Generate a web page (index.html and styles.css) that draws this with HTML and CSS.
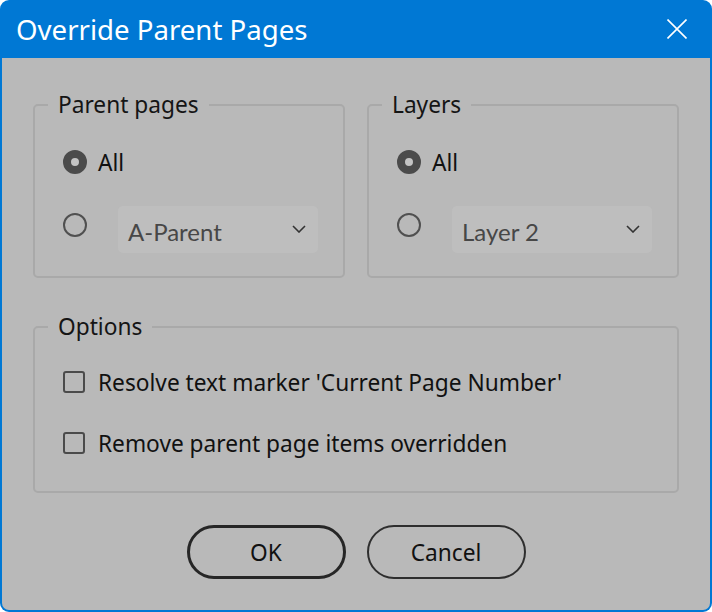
FILE: index.html
```html
<!DOCTYPE html>
<html lang="en">
<head>
  <meta charset="UTF-8">
  <title>Override Parent Pages</title>
  <link rel="stylesheet" href="styles.css">
</head>
<body>
  <div class="window">
    <div class="titlebar">
      <span class="title">Override Parent Pages</span>
      <svg class="close" width="20" height="20" viewBox="0 0 20 20">
        <path d="M0.5 0.5 L19.5 19.5 M19.5 0.5 L0.5 19.5" stroke="#fff" stroke-width="1.6" fill="none"/>
      </svg>
    </div>

    <div class="content">
      <div class="groups">
        <fieldset class="group">
          <legend>Parent pages</legend>
          <div class="row first">
            <span class="radio checked"></span>
            <span class="label">All</span>
          </div>
          <div class="row select-row">
            <span class="radio"></span>
            <div class="select">
              <span>A-Parent</span>
              <svg width="14" height="8" viewBox="0 0 14 8"><path d="M1 1 L7 7 L13 1" stroke="#333" stroke-width="1.6" fill="none"/></svg>
            </div>
          </div>
        </fieldset>

        <fieldset class="group">
          <legend>Layers</legend>
          <div class="row first">
            <span class="radio checked"></span>
            <span class="label">All</span>
          </div>
          <div class="row select-row">
            <span class="radio"></span>
            <div class="select">
              <span>Layer 2</span>
              <svg width="14" height="8" viewBox="0 0 14 8"><path d="M1 1 L7 7 L13 1" stroke="#333" stroke-width="1.6" fill="none"/></svg>
            </div>
          </div>
        </fieldset>
      </div>

      <fieldset class="group options">
        <legend>Options</legend>
        <div class="row first">
          <span class="checkbox"></span>
          <span class="label">Resolve text marker 'Current Page Number'</span>
        </div>
        <div class="row second">
          <span class="checkbox"></span>
          <span class="label">Remove parent page items overridden</span>
        </div>
      </fieldset>

      <div class="buttons">
        <button class="btn default">OK</button>
        <button class="btn">Cancel</button>
      </div>
    </div>
  </div>
</body>
</html>
```

FILE: styles.css
```css
body {
  margin: 0;
  background: #fff;
  font-family: "Noto Sans", "Open Sans", sans-serif;
}

.window {
  width: 712px;
  height: 612px;
  box-sizing: border-box;
  background: #0078d4;
  border-radius: 9px;
  padding: 0 2px 2px 2px;
  display: flex;
  flex-direction: column;
}

.titlebar {
  height: 58px;
  display: flex;
  align-items: center;
  justify-content: space-between;
  padding: 0 23px 0 14px;
  flex-shrink: 0;
}

.title {
  color: #fff;
  font-size: 27.6px;
  line-height: 30px;
}

.close {
  display: block;
}

.content {
  flex: 1;
  background: #b9b9b9;
  border-radius: 0 0 7px 7px;
  padding: 32px 31px 0 31px;
  display: flex;
  flex-direction: column;
}

.groups {
  display: flex;
  gap: 22px;
}

.group {
  margin: 0;
  border: 2px solid #a9a9a9;
  border-radius: 5px;
  padding: 0 0 0 13px;
  min-width: 0;
}

.groups .group {
  width: 312px;
  height: 188px;
  box-sizing: border-box;
}

legend {
  font-size: 22.7px;
  line-height: 30px;
  color: #151515;
  padding: 0 10px;
}

.row {
  display: flex;
  align-items: center;
  padding-left: 15px;
  height: 30px;
}

.row.first {
  margin-top: 27px;
}

.select-row {
  margin-top: 29px;
  height: 47px;
  align-items: flex-start;
}

.label {
  font-size: 22.7px;
  color: #111;
}

.radio {
  width: 24px;
  height: 24px;
  box-sizing: border-box;
  border: 2px solid #505050;
  border-radius: 50%;
  flex-shrink: 0;
  margin-right: 11px;
}

.radio.checked {
  border: 8px solid #4b4b4b;
  background: #c4c4c4;
}

.select-row .radio {
  margin-top: 7px;
  margin-right: 31px;
}

.select {
  width: 200px;
  height: 47px;
  box-sizing: border-box;
  background: #bebebe;
  border-radius: 5px;
  display: flex;
  align-items: center;
  justify-content: space-between;
  padding: 4px 12px 0 10px;
  font-family: Lato, sans-serif;
  font-size: 24px;
  color: #474747;
}

.select svg {
  margin-top: -6px;
}

.options {
  margin-top: 34px;
  height: 181px;
  box-sizing: border-box;
}

.options .row.first {
  margin-top: 25px;
}

.options .row.second {
  margin-top: 31px;
}

.checkbox {
  width: 22px;
  height: 22px;
  box-sizing: border-box;
  border: 2px solid #4b4b4b;
  border-radius: 3px;
  flex-shrink: 0;
  margin-right: 13px;
}

.buttons {
  display: flex;
  justify-content: center;
  gap: 21px;
  margin-top: 32px;
}

.btn {
  width: 159px;
  height: 54px;
  border-radius: 27px;
  border: 2px solid #2e2e2e;
  background: transparent;
  font-family: inherit;
  font-size: 22.7px;
  color: #111;
  padding: 0;
}

.btn.default {
  border: 3px solid #262626;
}
```
